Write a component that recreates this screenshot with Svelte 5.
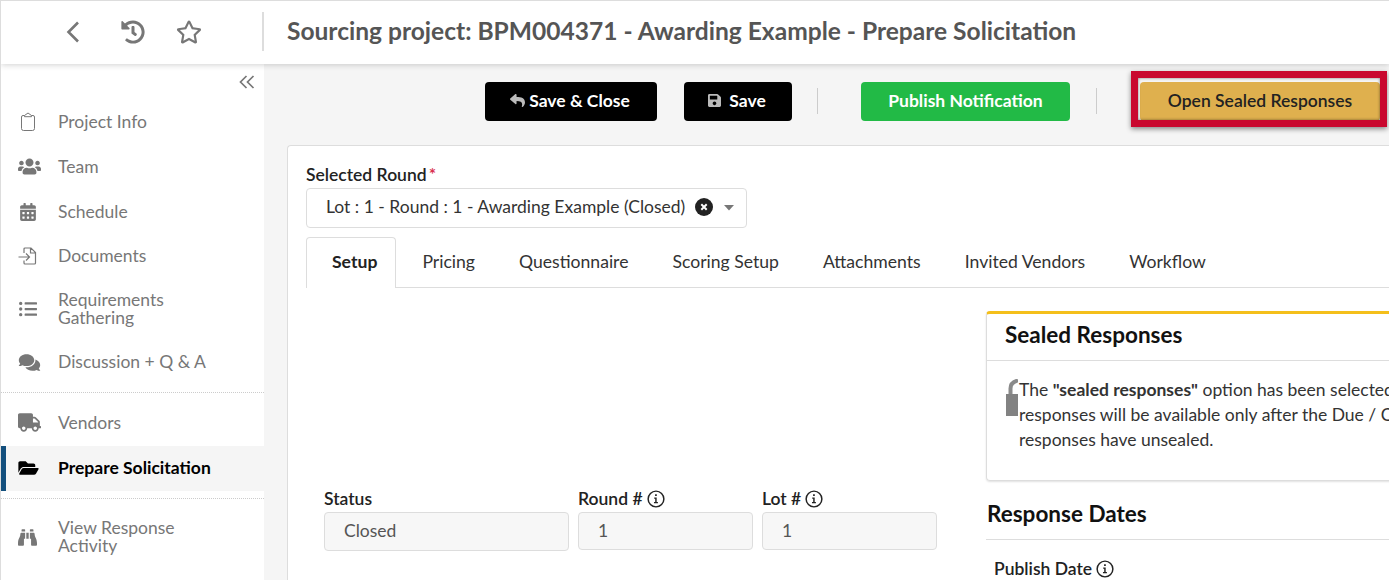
<script>
	const tabs = ['Setup', 'Pricing', 'Questionnaire', 'Scoring Setup', 'Attachments', 'Invited Vendors', 'Workflow'];
	const paths = {
		users: ['0 0 640 512', 'M96 224c35.3 0 64-28.7 64-64s-28.7-64-64-64-64 28.7-64 64 28.7 64 64 64zm448 0c35.3 0 64-28.7 64-64s-28.7-64-64-64-64 28.7-64 64 28.7 64 64 64zm32 32h-64c-17.6 0-33.5 7.1-45.1 18.6 40.3 22.1 68.9 62 75.1 109.4h66c17.7 0 32-14.3 32-32v-32c0-35.3-28.7-64-64-64zm-256 0c61.9 0 112-50.1 112-112S381.9 32 320 32 208 82.1 208 144s50.1 112 112 112zm76.8 32h-8.3c-20.8 10-43.9 16-68.5 16s-47.6-6-68.5-16h-8.3C179.6 288 128 339.6 128 403.2V432c0 26.5 21.5 48 48 48h288c26.5 0 48-21.5 48-48v-28.8c0-63.6-51.6-115.2-115.2-115.2zm-223.7-13.4C161.5 263.1 145.6 256 128 256H64c-35.3 0-64 28.7-64 64v32c0 17.7 14.3 32 32 32h65.9c6.3-47.4 34.9-87.3 75.2-109.4z'],
		calendar: ['0 0 448 512', 'M0 464c0 26.5 21.5 48 48 48h352c26.5 0 48-21.5 48-48V192H0v272zm320-196c0-6.6 5.4-12 12-12h40c6.6 0 12 5.4 12 12v40c0 6.6-5.4 12-12 12h-40c-6.6 0-12-5.4-12-12v-40zm0 128c0-6.6 5.4-12 12-12h40c6.6 0 12 5.4 12 12v40c0 6.6-5.4 12-12 12h-40c-6.6 0-12-5.4-12-12v-40zM192 268c0-6.6 5.4-12 12-12h40c6.6 0 12 5.4 12 12v40c0 6.6-5.4 12-12 12h-40c-6.6 0-12-5.4-12-12v-40zm0 128c0-6.6 5.4-12 12-12h40c6.6 0 12 5.4 12 12v40c0 6.6-5.4 12-12 12h-40c-6.6 0-12-5.4-12-12v-40zM64 268c0-6.6 5.4-12 12-12h40c6.6 0 12 5.4 12 12v40c0 6.6-5.4 12-12 12H76c-6.6 0-12-5.4-12-12v-40zm0 128c0-6.6 5.4-12 12-12h40c6.6 0 12 5.4 12 12v40c0 6.6-5.4 12-12 12H76c-6.6 0-12-5.4-12-12v-40zM400 64h-48V16c0-8.8-7.2-16-16-16h-32c-8.8 0-16 7.2-16 16v48H160V16c0-8.8-7.2-16-16-16h-32c-8.8 0-16 7.2-16 16v48H48C21.5 64 0 85.5 0 112v48h448v-48c0-26.5-21.5-48-48-48z'],
		comments: ['0 0 576 512', 'M416 192c0-88.4-93.1-160-208-160S0 103.6 0 192c0 34.3 14.1 65.9 38 92-13.4 30.2-35.5 54.2-35.8 54.5-2.2 2.3-2.8 5.7-1.5 8.7S4.8 352 8 352c36.6 0 66.9-12.3 88.7-25 32.2 15.7 70.3 25 111.3 25 114.9 0 208-71.6 208-160zm122 220c23.9-26 38-57.7 38-92 0-66.9-53.5-124.2-129.3-148.1.9 6.6 1.3 13.3 1.3 20.1 0 105.9-107.7 192-240 192-10.8 0-21.3-.8-31.7-1.9C207.8 439.6 281.8 480 368 480c41 0 79.1-9.2 111.3-25 21.8 12.7 52.1 25 88.7 25 3.2 0 6.1-1.9 7.3-4.8 1.3-2.9.7-6.3-1.5-8.7-.3-.3-22.4-24.2-35.8-54.5z'],
		truck: ['0 0 640 512', 'M624 352h-16V243.9c0-12.7-5.1-24.9-14.1-33.9L494 110.1c-9-9-21.2-14.1-33.9-14.1H416V48c0-26.5-21.5-48-48-48H48C21.5 0 0 21.5 0 48v320c0 26.5 21.5 48 48 48h16c0 53 43 96 96 96s96-43 96-96h128c0 53 43 96 96 96s96-43 96-96h48c8.8 0 16-7.2 16-16v-32c0-8.8-7.2-16-16-16zM160 464c-26.5 0-48-21.5-48-48s21.5-48 48-48 48 21.5 48 48-21.5 48-48 48zm320 0c-26.5 0-48-21.5-48-48s21.5-48 48-48 48 21.5 48 48-21.5 48-48 48zm80-208H416V144h44.1l99.9 99.9V256z'],
		folder: ['0 0 576 512', 'M572.694 292.093L500.27 416.248A63.997 63.997 0 0 1 444.989 448H45.025c-18.523 0-30.064-20.093-20.731-36.093l72.424-124.155A64 64 0 0 1 152 256h399.964c18.523 0 30.064 20.093 20.73 36.093zM152 224h328v-48c0-26.51-21.49-48-48-48H272l-64-64H48C21.49 64 0 85.49 0 112v278.046l69.077-118.418C86.214 242.25 117.989 224 152 224z'],
		binoculars: ['0 0 512 512', 'M416 48c0-8.84-7.16-16-16-16h-64c-8.84 0-16 7.16-16 16v48h96V48zM63.91 159.99C61.4 253.84 3.46 274.22 0 404v44c0 17.67 14.33 32 32 32h96c17.67 0 32-14.33 32-32V288h32V128H95.84c-17.63 0-31.45 14.37-31.93 31.99zm384.18 0c-.48-17.62-14.3-31.99-31.93-31.99H320v160h32v160c0 17.67 14.33 32 32 32h96c17.67 0 32-14.33 32-32v-44c-3.46-129.78-61.4-150.16-63.91-244.01zM176 32h-64c-8.84 0-16 7.16-16 16v48h96V48c0-8.84-7.16-16-16-16zm48 256h64V128h-64v160z'],
		list: ['0 0 512 512', 'M48 48a48 48 0 1 0 48 48 48 48 0 0 0-48-48zm0 160a48 48 0 1 0 48 48 48 48 0 0 0-48-48zm0 160a48 48 0 1 0 48 48 48 48 0 0 0-48-48zm448 16H176a16 16 0 0 0-16 16v32a16 16 0 0 0 16 16h320a16 16 0 0 0 16-16v-32a16 16 0 0 0-16-16zm0-320H176a16 16 0 0 0-16 16v32a16 16 0 0 0 16 16h320a16 16 0 0 0 16-16V80a16 16 0 0 0-16-16zm0 160H176a16 16 0 0 0-16 16v32a16 16 0 0 0 16 16h320a16 16 0 0 0 16-16v-32a16 16 0 0 0-16-16z'],
		reply: ['0 0 512 512', 'M8.309 189.836L184.313 37.851C199.719 24.546 224 35.347 224 56.015v80.053c160.629 1.839 288 34.032 288 186.258 0 61.441-39.581 122.309-83.333 154.132-13.653 9.931-33.111-2.533-28.077-18.631 45.344-145.012-21.507-183.51-176.59-185.742V360c0 20.7-24.3 31.453-39.687 18.164l-176.004-152c-11.071-9.562-11.086-26.753 0-36.328z'],
		save: ['0 0 448 512', 'M433.941 129.941l-83.882-83.882A48 48 0 0 0 316.118 32H48C21.49 32 0 53.49 0 80v352c0 26.51 21.49 48 48 48h352c26.51 0 48-21.49 48-48V163.882a48 48 0 0 0-14.059-33.941zM224 416c-35.346 0-64-28.654-64-64 0-35.346 28.654-64 64-64s64 28.654 64 64c0 35.346-28.654 64-64 64zm96-304.52V212c0 6.627-5.373 12-12 12H76c-6.627 0-12-5.373-12-12V108c0-6.627 5.373-12 12-12h228.52c3.183 0 6.235 1.264 8.485 3.515l3.48 3.48A11.996 11.996 0 0 1 320 111.48z'],
		history: ['0 0 512 512', 'M504 255.531c.253 136.64-111.18 248.372-247.82 248.468-59.015.042-113.223-20.53-155.822-54.911-11.077-8.94-11.905-25.541-1.839-35.607l11.267-11.267c8.609-8.609 22.353-9.551 31.891-1.984C173.062 425.135 212.781 440 256 440c101.705 0 184-82.311 184-184 0-101.705-82.311-184-184-184-48.814 0-93.149 18.969-126.068 49.932l50.754 50.754c10.08 10.08 2.941 27.314-11.313 27.314H24c-8.837 0-16-7.163-16-16V38.627c0-14.254 17.234-21.393 27.314-11.314l49.372 49.372C129.209 34.136 189.552 8 256 8c136.81 0 247.747 110.78 248 247.531zm-180.912 78.784l9.823-12.63c8.138-10.463 6.253-25.542-4.21-33.679L288 256.349V152c0-13.255-10.745-24-24-24h-16c-13.255 0-24 10.745-24 24v135.651l65.409 50.874c10.463 8.137 25.541 6.253 33.679-4.21z'],
		star: ['0 0 576 512', 'M528.1 171.5L382 150.2 316.7 17.8c-11.7-23.6-45.6-23.9-57.4 0L194 150.2 47.9 171.5c-26.2 3.8-36.7 36.1-17.7 54.6l105.7 103-25 145.5c-4.5 26.3 23.2 46 46.4 33.7L288 439.6l130.7 68.7c23.2 12.2 50.9-7.4 46.4-33.7l-25-145.5 105.7-103c19-18.5 8.5-50.8-17.7-54.6zM388.6 312.3l23.7 138.4L288 385.4l-124.3 65.3 23.7-138.4-100.6-98 139-20.2 62.2-126 62.2 126 139 20.2-100.6 98z']
	};
</script>

{#snippet icon(name, cls)}
	<svg class={cls} viewBox={paths[name][0]} aria-hidden="true"><path d={paths[name][1]} fill="currentColor" /></svg>
{/snippet}

{#snippet info()}
	<svg class="info" viewBox="0 0 16 16" aria-hidden="true">
		<circle cx="8" cy="8" r="7" fill="none" stroke="currentColor" stroke-width="1.3" />
		<path d="M6.4 6.6h2.2v4h1.100v1.200H6.200v-1.200h1.100V7.800h-.9zM7.200 3.800h1.500v1.600H7.200z" fill="currentColor" />
	</svg>
{/snippet}

<div class="page">
	<header class="topbar">
		<div class="top-icons">
			<svg class="ic-back" viewBox="0 0 14 24" aria-hidden="true"><path d="M12 2.500 2.500 12l9.500 9.500" fill="none" stroke="currentColor" stroke-width="2.600" /></svg>
			{@render icon('history', 'ic-top')}
			{@render icon('star', 'ic-star')}
		</div>
		<h1>Sourcing project: BPM004371 - Awarding Example - Prepare Solicitation</h1>
	</header>

	<div class="body">
		<nav class="sidebar">
			<div class="collapse">
				<svg viewBox="0 0 16 14" aria-hidden="true"><path d="M7.500 1 1.500 7l6 6M14.500 1l-6 6 6 6" fill="none" stroke="currentColor" stroke-width="1.700" /></svg>
			</div>
			<ul class="group first">
				<li class="h45">
					<span class="nav-ic">
						<svg class="ic-clip" viewBox="0 0 14 19" aria-hidden="true"><path d="M3.500 3.500 7 1l3.500 2.500h1.500a1.500 1.500 0 0 1 1.500 1.500V16.500a2 2 0 0 1-2 2H2.500a2 2 0 0 1-2-2V5a1.500 1.500 0 0 1 1.500-1.500zM3.500 3.500v1.200h7V3.500" fill="none" stroke="currentColor" stroke-width="1" /></svg>
					</span>
					Project Info
				</li>
				<li class="h45"><span class="nav-ic">{@render icon('users', 'ic-users')}</span>Team</li>
				<li class="h45"><span class="nav-ic">{@render icon('calendar', 'ic-cal')}</span>Schedule</li>
				<li class="h44">
					<span class="nav-ic">
						<svg class="ic-doc" viewBox="0 0 19 18" aria-hidden="true"><path d="M6 6V2a1 1 0 0 1 1-1h6l4.500 4.500V16a1 1 0 0 1-1 1H7a1 1 0 0 1-1-1v-2.500M12.500 1.500V6h5M.5 10h10.500M8 6.500l3.500 3.500L8 13.500" fill="none" stroke="currentColor" stroke-width="1.200" /></svg>
					</span>
					Documents
				</li>
				<li class="h62"><span class="nav-ic">{@render icon('list', 'ic-list')}</span><span>Requirements<br />Gathering</span></li>
				<li class="h44 discuss"><span class="nav-ic">{@render icon('comments', 'ic-users')}</span>Discussion + Q &amp; A</li>
			</ul>
			<ul class="group vendors">
				<li class="h45 lift"><span class="nav-ic">{@render icon('truck', 'ic-users')}</span>Vendors</li>
				<li class="h45 lift active"><span class="nav-ic">{@render icon('folder', 'ic-folder')}</span>Prepare Solicitation</li>
			</ul>
			<ul class="group view">
				<li class="h62"><span class="nav-ic">{@render icon('binoculars', 'ic-bino')}</span><span>View Response<br />Activity</span></li>
			</ul>
		</nav>

		<main>
			<div class="toolbar">
				<button class="btn dark w172">{@render icon('reply', 'ic-btn')}Save &amp; Close</button>
				<button class="btn dark w108">{@render icon('save', 'ic-btn save')}Save</button>
				<span class="sep"></span>
				<button class="btn green">Publish Notification</button>
				<span class="sep"></span>
				<button class="btn gold">Open Sealed Responses<span class="callout"></span></button>
			</div>

			<section class="card">
				<div class="round-label">Selected Round<span class="req">*</span></div>
				<div class="select">
					<span>Lot : 1 - Round : 1 - Awarding Example (Closed)</span>
					<svg class="clear" viewBox="0 0 18 18" aria-hidden="true">
						<circle cx="9" cy="9" r="9" fill="#222" />
						<path d="M6.300 6.300l5.400 5.400M11.700 6.300l-5.400 5.400" stroke="#fff" stroke-width="2" />
					</svg>
					<svg class="caret" viewBox="0 0 10 6" aria-hidden="true"><path d="M0 0h10L5 5.500z" fill="currentColor" /></svg>
				</div>

				<div class="tabs">
					{#each tabs as tab, i}
						<div class="tab" class:current={i === 0}>{tab}</div>
					{/each}
				</div>

				<div class="content">
					<div class="left">
						<div class="fields">
							<div class="field w245">
								<div class="label">Status</div>
								<div class="input tall">Closed</div>
							</div>
							<div class="field w175">
								<div class="label">Round # {@render info()}</div>
								<div class="input">1</div>
							</div>
							<div class="field w175">
								<div class="label">Lot # {@render info()}</div>
								<div class="input">1</div>
							</div>
						</div>
					</div>

					<div class="right">
						<div class="panel">
							<h2>Sealed Responses</h2>
							<div class="panel-body">
								<svg class="lock" viewBox="0 0 12 37" aria-hidden="true">
									<path d="M4.500 16V9.500C4.500 5.500 7.500 2.500 12 1.500" fill="none" stroke="#8a8a8a" stroke-width="4" />
									<rect x="0" y="15" width="12" height="22" fill="#828282" />
								</svg>
								<p>The <b>"sealed responses"</b> option has been selected for this round and the</p>
								<p>responses will be available only after the Due / Close date has passed and</p>
								<p>responses have unsealed.</p>
							</div>
						</div>
						<h3>Response Dates</h3>
						<div class="label publish">Publish Date {@render info()}</div>
					</div>
				</div>
			</section>
		</main>
	</div>
</div>

<style>
	:global(body) {
		margin: 0;
		overflow: hidden;
	}

	.page {
		width: 1389px;
		height: 580px;
		overflow: hidden;
		font-family: Lato, 'Liberation Sans', sans-serif;
		font-size: 17.5px;
		color: #333;
		background: #f5f5f5;
		display: flex;
		flex-direction: column;
		box-sizing: border-box;
		border-left: 1px solid #ddd;
		border-top: 1px solid #ddd;
	}

	.topbar {
		height: 63px;
		flex: none;
		display: flex;
		align-items: center;
		background: #fff;
		box-shadow: 0 1px 6px rgba(0, 0, 0, 0.18);
		position: relative;
		z-index: 2;
	}

	.top-icons {
		width: 263px;
		height: 39px;
		box-sizing: border-box;
		flex: none;
		display: flex;
		align-items: center;
		padding-left: 65px;
		border-right: 2px solid #ddd;
		color: #777;
		margin-bottom: 2px;
	}

	.ic-back {
		width: 14px;
		height: 24px;
	}

	.ic-top {
		width: 24px;
		height: 24px;
		margin-left: 41px;
	}

	.ic-star {
		width: 26px;
		height: 24px;
		margin-left: 31px;
	}

	h1 {
		margin: 0 0 4px 23px;
		font-size: 24.55px;
		font-weight: 700;
		color: #555;
		white-space: nowrap;
	}

	.body {
		flex: 1;
		display: flex;
		min-height: 0;
	}

	.sidebar {
		width: 263px;
		flex: none;
		background: #fff;
		color: #777;
	}

	.collapse {
		height: 35px;
		display: flex;
		justify-content: flex-end;
		align-items: center;
		padding-right: 9px;
		color: #777;
	}

	.collapse svg {
		width: 16px;
		height: 14px;
	}

	ul {
		list-style: none;
		margin: 0;
		padding: 0;
	}

	li {
		display: flex;
		align-items: center;
		line-height: 18px;
		padding-left: 17px;
	}

	.group.first {
		padding-bottom: 8px;
		border-bottom: 1px dotted #ccc;
	}

	.group.vendors {
		padding: 8px 0 7px;
		border-bottom: 1px dotted #ccc;
	}

	.group.view {
		padding-top: 7px;
	}

	.h44 {
		height: 44px;
	}

	.h45 {
		height: 45px;
	}

	.h62 {
		height: 62px;
	}

	.lift {
		box-sizing: border-box;
		padding-bottom: 2px;
	}

	.active {
		background: #f5f5f5;
		color: #000;
		font-weight: 700;
		border-left: 5px solid #134f7d;
		padding-left: 12px;
	}

	.nav-ic {
		width: 40px;
		flex: none;
		display: flex;
		align-items: center;
	}

	.ic-clip {
		width: 14px;
		height: 19px;
		margin-left: 3px;
	}

	.ic-users {
		width: 23px;
		height: 19px;
	}

	.ic-cal {
		width: 16px;
		height: 18px;
		margin-left: 2px;
	}

	.ic-doc {
		width: 19px;
		height: 18px;
	}

	.ic-list {
		width: 18px;
		height: 18px;
		margin-left: 1px;
	}

	.ic-folder {
		width: 21px;
		height: 18px;
	}

	.ic-bino {
		width: 19px;
		height: 19px;
	}

	main {
		flex: 1;
		min-width: 0;
		padding-left: 23px;
	}

	.toolbar {
		height: 81px;
		display: flex;
		align-items: flex-start;
		justify-content: flex-end;
		padding: 18px 9px 0 0;
		box-sizing: border-box;
	}

	.btn {
		height: 39px;
		border: 0;
		border-radius: 4px;
		font: 700 17.5px Lato, 'Liberation Sans', sans-serif;
		color: #fff;
		padding: 0 0 2px;
		display: flex;
		align-items: center;
		justify-content: center;
		position: relative;
	}

	.dark {
		background: #000;
	}

	.w172 {
		width: 172px;
		margin-right: 27px;
		margin-left: -1px;
	}

	.w108 {
		width: 108px;
	}

	.ic-btn {
		width: 15px;
		height: 15px;
		color: #bbb;
		margin-right: 4px;
		margin-left: -2px;
	}

	.ic-btn.save {
		width: 13px;
		margin-right: 8px;
	}

	.sep {
		width: 1px;
		height: 26px;
		background: #ccc;
		margin: 6px 25px 0;
	}

	.green {
		width: 209px;
		background: #22ba46;
		margin-left: 18px;
		margin-right: 1px;
	}

	.gold {
		width: 240px;
		background: #dfb04e;
		color: #222;
		margin-left: 18px;
		font-weight: 600;
	}

	.callout {
		position: absolute;
		left: -9px;
		right: -7px;
		top: -11px;
		bottom: -6px;
		border: 7px solid #c9082f;
		box-shadow: 0 2px 5px rgba(0, 0, 0, 0.45), inset 0 0 3px rgba(0, 0, 0, 0.5);
		pointer-events: none;
	}

	.card {
		background: #fff;
		border: 1px solid #ddd;
		border-radius: 4px 0 0 0;
		border-right: 0;
		height: 600px;
		padding: 18px 0 0 18px;
		box-sizing: border-box;
	}

	.round-label {
		line-height: 21px;
		font-weight: 600;
		color: #222;
		margin-bottom: 3px;
	}

	.req {
		color: #d9304f;
		margin-left: 2px;
	}

	.select {
		width: 441px;
		height: 40px;
		box-sizing: border-box;
		border: 1px solid #ddd;
		border-radius: 4px;
		display: flex;
		align-items: center;
		padding-left: 19px;
		color: #333;
		white-space: nowrap;
	}

	.select span {
		margin-bottom: 4px;
	}

	.clear {
		width: 18px;
		height: 18px;
		margin-left: 10px;
		margin-bottom: 2px;
		flex: none;
	}

	.caret {
		width: 10px;
		height: 6px;
		margin-left: 11px;
		color: #777;
		flex: none;
	}

	.tabs {
		display: flex;
		height: 51px;
		margin-top: 9px;
		border-bottom: 1px solid #ddd;
		box-sizing: border-box;
		font-size: 17.6px;
	}

	.tab {
		padding: 0 22px;
		line-height: 50px;
		color: #333;
		white-space: nowrap;
	}

	.tab.current {
		padding: 0 18px 0 25px;
		margin-right: 4px;
		font-weight: 700;
		line-height: 48px;
		color: #222;
		background: #fff;
		border: 1px solid #ddd;
		border-bottom: 0;
		border-radius: 4px 4px 0 0;
		height: 51px;
		box-sizing: border-box;
	}

	.content {
		display: grid;
		grid-template-columns: 680px 600px;
	}

	.left {
		padding: 200px 0 0 18px;
	}

	.fields {
		display: flex;
		gap: 9px;
	}

	.w245 {
		width: 245px;
	}

	.w175 {
		width: 175px;
	}

	.label {
		font-weight: 600;
		color: #222;
		line-height: 22px;
		display: flex;
		align-items: center;
		gap: 4px;
		margin-bottom: 2px;
	}

	.info {
		width: 18px;
		height: 18px;
		color: #222;
	}

	.input {
		height: 38px;
		box-sizing: border-box;
		background: #f7f7f7;
		border: 1px solid #ddd;
		border-radius: 4px;
		padding-left: 19px;
		line-height: 36px;
		color: #555;
	}

	.input.tall {
		height: 39px;
	}

	.right {
		padding-top: 23px;
	}

	.panel {
		border: 1px solid #ddd;
		border-top: 3px solid #f4bf1b;
		border-radius: 4px;
		height: 170px;
		box-sizing: border-box;
		box-shadow: 0 1px 2px rgba(0, 0, 0, 0.12);
	}

	h2 {
		margin: 0;
		font-size: 22.5px;
		font-weight: 700;
		color: #111;
		height: 46px;
		line-height: 42px;
		padding-left: 18px;
		border-bottom: 1px solid #ddd;
	}

	.panel-body {
		padding: 16px 0 0 32px;
		position: relative;
	}

	.lock {
		position: absolute;
		left: 19px;
		top: 18px;
		width: 12px;
		height: 37px;
	}

	p {
		margin: 0;
		line-height: 25px;
		white-space: nowrap;
		color: #333;
	}

	h3 {
		margin: 18px 0 0;
		font-size: 22.5px;
		font-weight: 700;
		color: #111;
		line-height: 30px;
		padding: 0 0 10px 1px;
		border-bottom: 1px solid #ddd;
	}

	.publish {
		margin: 18px 0 0 8px;
	}
</style>
